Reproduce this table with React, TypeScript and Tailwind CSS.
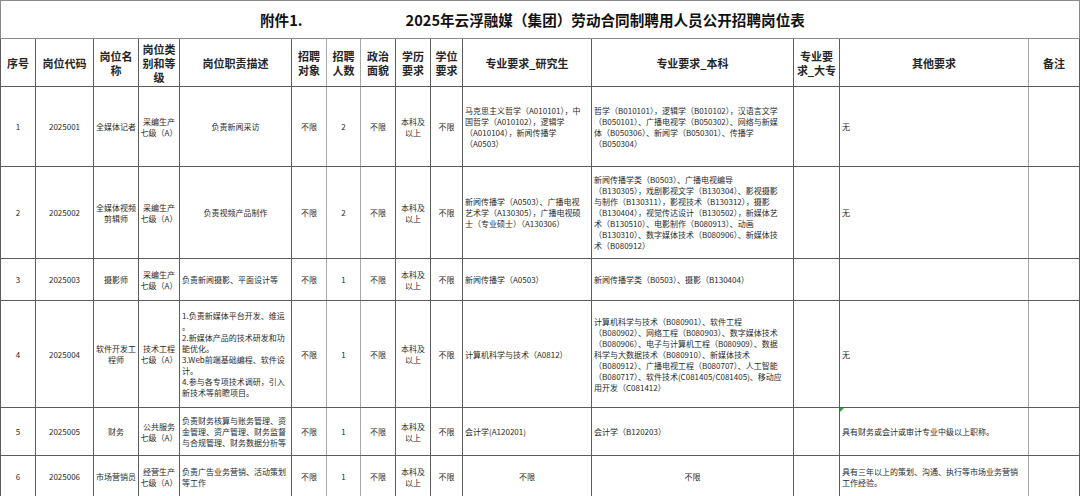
import React from 'react';

type Row = {
  no: string;
  code: string;
  name: string[];
  level: string[];
  desc: string[];
  descAlign: 'center' | 'left';
  count: string;
  grad: string[];
  gradCenter?: boolean;
  bach: string[];
  bachCenter?: boolean;
  other: string[];
  mark?: boolean;
  h: string;
};

const rows: Row[] = [
  {
    no: '1',
    code: '2025001',
    name: ['全媒体记者'],
    level: ['采编生产', '七级（A）'],
    desc: ['负责新闻采访'],
    descAlign: 'center',
    count: '2',
    grad: ['马克思主义哲学（A010101），中', '国哲学（A010102），逻辑学', '（A010104），新闻传播学', '（A0503）'],
    bach: [
      '哲学（B010101），逻辑学（B010102），汉语言文学',
      '（B050101）、广播电视学（B050302）、网络与新媒',
      '体（B050306）、新闻学（B050301）、传播学',
      '（B050304）',
    ],
    other: ['无'],
    h: 'h-[80px]',
  },
  {
    no: '2',
    code: '2025002',
    name: ['全媒体视频', '剪辑师'],
    level: ['采编生产', '七级（A）'],
    desc: ['负责视频产品制作'],
    descAlign: 'center',
    count: '2',
    grad: ['新闻传播学（A0503）、广播电视', '艺术学（A130305），广播电视硕', '士（专业硕士）（A130306）'],
    bach: [
      '新闻传播学类（B0503）、广播电视编导',
      '（B130305），戏剧影视文学（B130304）、影视摄影',
      '与制作（B130311），影视技术（B130312），摄影',
      '（B130404），视觉传达设计（B130502），新媒体艺',
      '术（B130510）、电影制作（B080913）、动画',
      '（B130310）、数字媒体技术（B080906）、新媒体技',
      '术（B080912）',
    ],
    other: ['无'],
    h: 'h-[92px]',
  },
  {
    no: '3',
    code: '2025003',
    name: ['摄影师'],
    level: ['采编生产', '七级（A）'],
    desc: ['负责新闻摄影、平面设计等'],
    descAlign: 'left',
    count: '1',
    grad: ['新闻传播学（A0503）'],
    bach: ['新闻传播学类（B0503）、摄影（B130404）'],
    other: [],
    h: 'h-[42px]',
  },
  {
    no: '4',
    code: '2025004',
    name: ['软件开发工', '程师'],
    level: ['技术工程', '七级（A）'],
    desc: [
      '1.负责新媒体平台开发、维运',
      '。',
      '2.新媒体产品的技术研发和功',
      '能优化。',
      '3.Web前端基础编程、软件设',
      '计。',
      '4.参与各专项技术调研，引入',
      '新技术等前瞻项目。',
    ],
    descAlign: 'left',
    count: '1',
    grad: ['计算机科学与技术（A0812）'],
    bach: [
      '计算机科学与技术（B080901）、软件工程',
      '（B080902）、网络工程（B080903）、数字媒体技术',
      '（B080906）、电子与计算机工程（B080909）、数据',
      '科学与大数据技术（B080910）、新媒体技术',
      '（B080912）、广播电视工程（B080707）、人工智能',
      '（B080717）、软件技术(C081405/C081405)、移动应',
      '用开发（C081412）',
    ],
    other: ['无'],
    h: 'h-[107px]',
  },
  {
    no: '5',
    code: '2025005',
    name: ['财务'],
    level: ['公共服务', '七级（A）'],
    desc: ['负责财务核算与账务管理、资', '金管理、资产管理、财务监督', '与合规管理、财务数据分析等'],
    descAlign: 'left',
    count: '1',
    grad: ['会计学(A120201)'],
    bach: ['会计学（B120203）'],
    other: ['具有财务或会计或审计专业中级以上职称。'],
    mark: true,
    h: 'h-[48px]',
  },
  {
    no: '6',
    code: '2025006',
    name: ['市场营销员'],
    level: ['经营生产', '七级（A）'],
    desc: ['负责广告业务营销、活动策划', '等工作'],
    descAlign: 'left',
    count: '1',
    grad: ['不限'],
    gradCenter: true,
    bach: ['不限'],
    bachCenter: true,
    other: ['具有三年以上的策划、沟通、执行等市场业务营销', '工作经验。'],
    h: 'h-[42px]',
  },
];

const widths = [35, 58, 45, 41, 112, 35, 34, 35, 35, 32, 129, 202, 46, 189, 51];

function Lines({ lines }: { lines: string[] }) {
  return (
    <>
      {lines.map((l, i) => (
        <div key={i} className="whitespace-nowrap">
          {l}
        </div>
      ))}
    </>
  );
}

const th =
  'border border-[#5c5c5c] text-center align-middle font-semibold text-[11px] leading-[14px] text-[#262626] px-0 whitespace-nowrap';
const td = 'border border-[#5c5c5c] align-middle text-[8px] leading-[11px] text-[#2a2a2a]';

export default function App() {
  return (
    <div
      className="w-[1080px] h-[496px] overflow-hidden bg-white"
      style={{ fontFamily: '"Noto Sans CJK SC", "Noto Sans", sans-serif' }}
    >
      <table className="table-fixed border-collapse w-[1079px]">
        <colgroup>
          {widths.map((w, i) => (
            <col key={i} style={{ width: w }} />
          ))}
        </colgroup>
        <tbody>
          <tr className="h-[38px]">
            <td colSpan={15} className="border border-[#8a8a8a] align-middle">
              <div className="flex items-center pl-[259px] text-[14.6px] font-bold text-[#111]">
                <span>附件1.</span>
                <span className="ml-[103px]">2025年云浮融媒（集团）劳动合同制聘用人员公开招聘岗位表</span>
              </div>
            </td>
          </tr>
          <tr className="h-[48px]">
            <td className={th}>序号</td>
            <td className={th}>岗位代码</td>
            <td className={th}>
              岗位名
              <br />称
            </td>
            <td className={th}>
              岗位类
              <br />
              别和等
              <br />级
            </td>
            <td className={th}>岗位职责描述</td>
            <td className={`${th} border-r-[#a8a8a8]`}>
              招聘
              <br />
              对象
            </td>
            <td className={`${th} border-r-[#a8a8a8]`}>
              招聘
              <br />
              人数
            </td>
            <td className={th}>
              政治
              <br />
              面貌
            </td>
            <td className={th}>
              学历
              <br />
              要求
            </td>
            <td className={th}>
              学位
              <br />
              要求
            </td>
            <td className={th}>专业要求_研究生</td>
            <td className={th}>专业要求_本科</td>
            <td className={th}>
              专业要
              <br />
              求_大专
            </td>
            <td className={`${th} border-r-[#a8a8a8]`}>其他要求</td>
            <td className={th}>备注</td>
          </tr>
          {rows.map((r) => (
            <tr key={r.no} className={r.h}>
              <td className={`${td} text-center`}>{r.no}</td>
              <td className={`${td} text-center`}>{r.code}</td>
              <td className={`${td} text-center`}>
                <Lines lines={r.name} />
              </td>
              <td className={`${td} text-center`}>
                <Lines lines={r.level} />
              </td>
              <td className={`${td} px-[2px] ${r.descAlign === 'center' ? 'text-center' : 'text-left'}`}>
                <Lines lines={r.desc} />
              </td>
              <td className={`${td} text-center border-r-[#a8a8a8]`}>不限</td>
              <td className={`${td} text-center border-r-[#a8a8a8]`}>{r.count}</td>
              <td className={`${td} text-center`}>不限</td>
              <td className={`${td} text-center`}>
                本科及
                <br />
                以上
              </td>
              <td className={`${td} text-center`}>不限</td>
              <td className={`${td} px-[2px] overflow-hidden ${r.gradCenter ? 'text-center' : 'text-left'}`}>
                <Lines lines={r.grad} />
              </td>
              <td className={`${td} px-[2px] overflow-hidden ${r.bachCenter ? 'text-center' : 'text-left'}`}>
                <Lines lines={r.bach} />
              </td>
              <td className={td}></td>
              <td className={`${td} relative px-[2px] text-left border-r-[#a8a8a8]`}>
                {r.mark && (
                  <span className="absolute left-0 top-0 w-0 h-0 border-t-[4px] border-r-[4px] border-t-[#2e9d3a] border-r-transparent" />
                )}
                <Lines lines={r.other} />
              </td>
              <td className={td}></td>
            </tr>
          ))}
        </tbody>
      </table>
    </div>
  );
}
